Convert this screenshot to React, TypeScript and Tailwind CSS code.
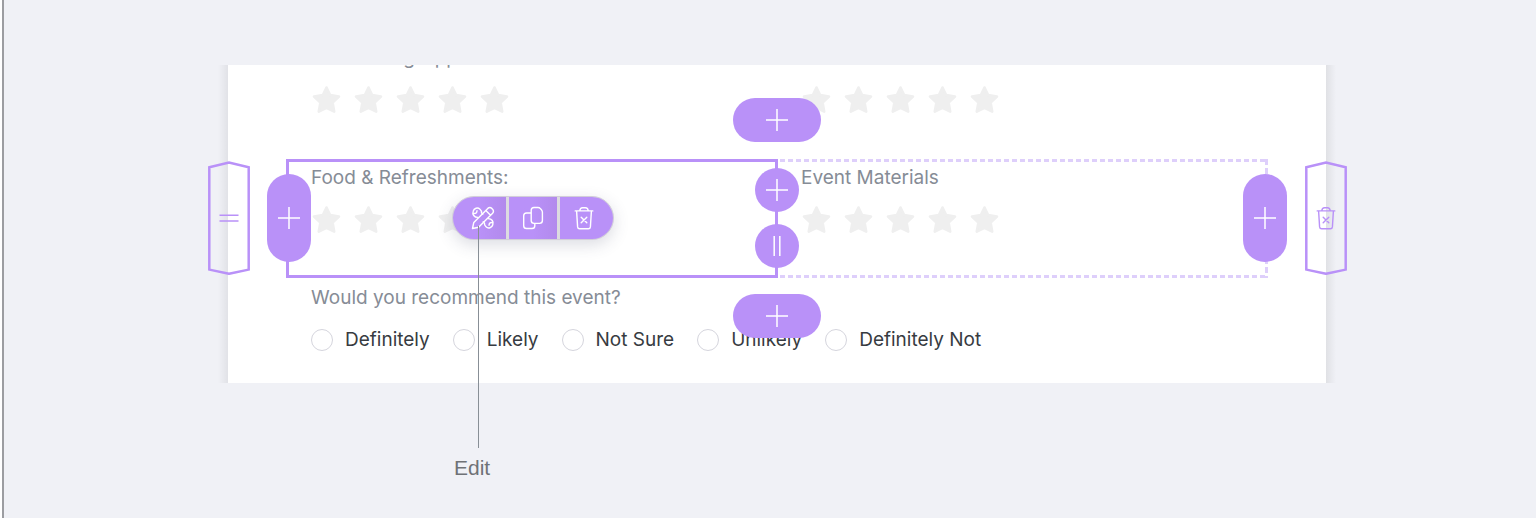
import type { ReactNode } from "react";

const PLUS = "M11 0V22M0 11H22";

function Star() {
  return (
    <svg viewBox="0 0 28 28" className="size-7 overflow-visible" aria-hidden="true">
      <path
        d="M14.5 1.5L18.1 9.1L27 10.5L20.6 16.6L22.2 25.6L14.5 21.8L6.8 25.6L8.4 16.6L2 10.5L10.9 9.1Z"
        fill="#efefef"
        stroke="#efefef"
        strokeWidth="2.6"
        strokeLinejoin="round"
      />
    </svg>
  );
}

function Rating({ label }: { label: string }) {
  return (
    <div role="group" aria-label={label} className="ml-px flex gap-[14px]">
      {[1, 2, 3, 4, 5].map((n) => (
        <button key={n} type="button" aria-label={`${n} of 5`} className="size-7">
          <Star />
        </button>
      ))}
    </div>
  );
}

function Field({ label, className }: { label: string; className: string }) {
  return (
    <div className={`h-[119px] whitespace-nowrap ${className}`}>
      <p className="mb-[14px] text-[19px] leading-7 text-[#868c96]">{label}</p>
      <Rating label={label} />
    </div>
  );
}

function AddButton({ label, className }: { label: string; className: string }) {
  return (
    <button
      type="button"
      aria-label={label}
      className={`absolute flex items-center justify-center rounded-full bg-[#b991f8] ${className}`}
    >
      <svg viewBox="0 0 22 22" className="size-[22px]" fill="none" stroke="white" strokeWidth="1.5">
        <path d={PLUS} />
      </svg>
    </button>
  );
}

function TrashIcon() {
  return (
    <svg
      viewBox="0 0 20 24"
      className="h-6 w-5"
      fill="none"
      stroke="currentColor"
      strokeWidth="1.4"
      strokeLinejoin="round"
      strokeLinecap="round"
    >
      <path d="M1.2 4.9H18.8M5.8 4.7C6 2.8 7 1.8 8.5 1.8H11.5C13 1.8 14 2.8 14.2 4.7M2.6 5L3.6 20.9Q3.8 22.8 5.6 22.8H14.4Q16.2 22.8 16.4 20.9L17.4 5M7.2 11.2L12.8 16.8M12.8 11.2L7.2 16.8" />
    </svg>
  );
}

function CopyIcon() {
  return (
    <svg viewBox="0 0 22 24" className="h-6 w-[22px]" fill="none" stroke="currentColor" strokeWidth="1.4" strokeLinejoin="round">
      <path d="M12 1.5H16Q17.4 1.5 18.4 2.6L19.4 3.7Q20.4 4.8 20.4 6.2V14.6Q20.4 17.4 17.6 17.4H12Q9.2 17.4 9.2 14.6V4.3Q9.2 1.5 12 1.5ZM9.2 7H4.5Q1.7 7 1.7 9.8V19.7Q1.7 22.5 4.5 22.5H10Q12.8 22.5 12.8 19.7V17.4" />
    </svg>
  );
}

function EditIcon() {
  return (
    <svg viewBox="0 0 24 24" className="size-6" fill="none" stroke="currentColor" strokeWidth="1.4" strokeLinejoin="round" strokeLinecap="round">
      <path d="M1.5 22.5L2.8 16.4L16.8 2.4Q18.8 .7 20.8 2.4L21.6 3.2Q23.3 5.2 21.6 7.2L7.6 21.2ZM14.8 4.4L19.6 9.2" />
      <path d="M6.8 11.4C3.2 11.4 1 8.4 2.2 5.2C3 2.2 6.6 1 9 3.2C10.2 4.2 10.8 5.4 10.5 6.8L11.8 8.2M2.4 7.2Q5.6 8.2 6 4.8" />
      <path d="M17.2 12.6C20.8 12.6 23 15.6 21.8 18.8C21 21.8 17.4 23 15 20.8C13.8 19.8 13.2 18.6 13.5 17.2L12.2 15.8M21.6 16.8Q18.4 15.8 18 19.2" />
    </svg>
  );
}

function RowHandle({ label, className, children }: { label: string; className: string; children: ReactNode }) {
  return (
    <button
      type="button"
      aria-label={label}
      className={`absolute top-[2px] flex h-[114px] w-[42px] items-center justify-center text-[#b991f8] ${className}`}
    >
      <svg viewBox="0 0 42 114" className="absolute inset-0 size-full" fill="none" stroke="currentColor" strokeWidth="2.5">
        <path d="M1.3 6.3L21 1.6L40.7 6.3V108.6L21 112.8L1.3 108.6Z" />
      </svg>
      {children}
    </button>
  );
}

const tool = "flex h-[42px] items-center justify-center bg-[#b991f8]";

function Toolbar() {
  return (
    <div className="absolute top-[37px] left-[166px] flex gap-[3px] rounded-full border border-[#d2ced9] bg-[#dcdbe0] text-white shadow-[0_5px_16px_rgba(60,65,100,0.18)]">
      <button type="button" aria-label="Edit" className={`${tool} w-[53px] rounded-l-full bg-linear-to-r from-[#b991f8] from-50% to-[#b28aec] pl-[6px]`}>
        <EditIcon />
      </button>
      <button type="button" aria-label="Duplicate" className={`${tool} w-12 bg-linear-to-r from-[#b991f8] from-50% to-[#b28aec]`}>
        <CopyIcon />
      </button>
      <button type="button" aria-label="Delete" className={`${tool} w-[53px] rounded-r-full pr-[6px]`}>
        <TrashIcon />
      </button>
      <div className="absolute top-[29px] left-px flex flex-col">
        <span className="ml-6 h-[222px] w-px bg-[#888f96]" />
        <span className="mt-[6px] font-['Liberation_Sans',sans-serif] text-[21px] leading-7 text-[#6f7276]">Edit</span>
      </div>
    </div>
  );
}

const options = ["Definitely", "Likely", "Not Sure", "Unlikely", "Definitely Not"];

export default function App() {
  return (
    <main className="ml-[2px] min-h-screen border-l-2 border-[#9c9da1] bg-[#f0f1f6] pt-[65px] pr-[210px] pb-[135px] pl-[224px] font-['Inter',sans-serif]">
      <form className="relative bg-white px-[58px]">
        <div className="absolute inset-y-0 -left-[10px] w-[10px] bg-linear-to-l from-[#e1e2e7] to-[#f0f1f6]" />
        <div className="absolute inset-y-0 -right-[10px] w-[10px] bg-linear-to-r from-[#e0e1e5] to-[#f0f1f6]" />

        <div className="flex h-[94px] items-end overflow-hidden pb-px">
          <div className="grid w-full grid-cols-2">
            <Field label="Networking Opportunities" className="pt-[5px] pl-[25px]" />
            <Field label="Event Schedule" className="pt-[5px] pl-6" />
          </div>
        </div>

        <div className="relative z-10 grid grid-cols-2">
          <div className="relative">
            <Field label="Food &amp; Refreshments:" className="-mr-px border-3 border-[#b991f8] pt-[2px] pl-[22px]" />
            <Toolbar />
          </div>
          <div className="relative">
            <Field label="Event Materials" className="pt-[5px] pl-6" />
            <svg className="absolute inset-0 size-full" fill="none" stroke="#decffb" strokeWidth="3" aria-hidden="true">
              <line x1="3" y1="1.5" x2="100%" y2="1.5" strokeDasharray="5 3" />
              <line x1="3" y1="117.5" x2="100%" y2="117.5" strokeDasharray="5 3" />
              <line x1="100%" y1="0" x2="100%" y2="119" strokeWidth="6" strokeDasharray="6 3" />
            </svg>
          </div>

          <AddButton label="Add row above" className="-top-[61px] left-1/2 h-11 w-[88px] -translate-x-1/2" />
          <AddButton label="Add row below" className="top-[135px] left-1/2 h-11 w-[88px] -translate-x-1/2" />
          <AddButton label="Add column at start" className="top-[15px] -left-[19px] h-[88px] w-11" />
          <AddButton label="Add column at end" className="top-[15px] -right-[19px] h-[88px] w-11" />
          <AddButton label="Add column between" className="top-[9px] left-1/2 size-11 -translate-x-1/2" />
          <button
            type="button"
            aria-label="Resize columns"
            className="absolute top-[65px] left-1/2 flex size-11 -translate-x-1/2 items-center justify-center rounded-full bg-[#b991f8]"
          >
            <svg viewBox="0 0 8 20" className="h-5 w-2" fill="none" stroke="white" strokeWidth="1.5">
              <path d="M1.2 0V20M6.8 0V20" />
            </svg>
          </button>

          <RowHandle label="Move row" className="-left-[78px]">
            <svg viewBox="0 0 20 8" className="h-2 w-5" fill="none" stroke="currentColor" strokeWidth="1.5">
              <path d="M.5 1.2H19.5M.5 6.9H19.5" />
            </svg>
          </RowHandle>
          <RowHandle label="Delete row" className="-right-[79px]">
            <TrashIcon />
          </RowHandle>
        </div>

        <fieldset className="h-[105px] pl-[25px] text-[19px] leading-7">
          <legend className="pt-[6px] text-[#868c96]">Would you recommend this event?</legend>
          <div className="mt-[14px] flex gap-[23px] whitespace-nowrap text-[#373b41]">
            {options.map((option) => (
              <label key={option} className="flex items-center gap-3">
                <input
                  type="radio"
                  name="recommend"
                  value={option}
                  className="size-[22px] appearance-none rounded-full border border-[#d5d5dd] bg-white"
                />
                {option}
              </label>
            ))}
          </div>
        </fieldset>
      </form>
    </main>
  );
}
